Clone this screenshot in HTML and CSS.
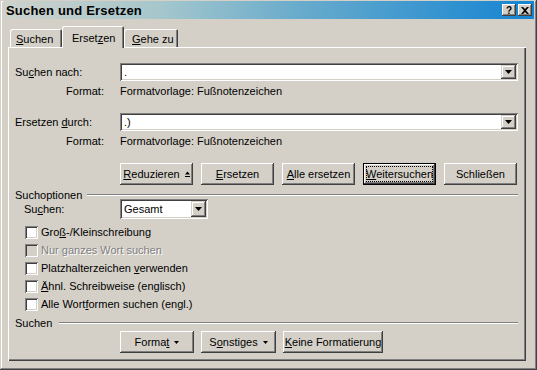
FILE: index.html
```html
<!DOCTYPE html>
<html>

<head>
    <meta charset="utf-8" />
    <title>Suchen und Ersetzen</title>
    <link rel="stylesheet" href="styles.css">
</head>

<body>
    <div class="window">
        <div class="titlebar">
            <span class="title">Suchen und Ersetzen</span>
            <span class="caption-btns">
                <span class="cbtn help">?</span>
                <span class="cbtn close">
                    <svg width="8" height="7" viewBox="0 0 8 7"><path d="M0 0h2l2 2 2-2h2L5 3.5 8 7H6L4 5 2 7H0l3-3.5z" fill="#000"/></svg>
                </span>
            </span>
        </div>

        <div class="tabs">
            <div class="tab tab-suchen"><u>S</u>uchen</div>
            <div class="tab tab-ersetzen active">Erset<u>z</u>en</div>
            <div class="tab tab-gehe"><u>G</u>ehe zu</div>
        </div>

        <div class="panel">
            <div class="field-row">
                <span class="label">Su<u>c</u>hen nach:</span>
                <div class="combo">
                    <span class="value">.</span>
                    <span class="drop"><svg width="7" height="4" viewBox="0 0 7 4"><path d="M0 0h7L3.5 4z" fill="#000"/></svg></span>
                </div>
            </div>
            <div class="fmt-row">
                <span class="label fmt-label">Format:</span>
                <span>Formatvorlage: Fußnotenzeichen</span>
            </div>

            <div class="field-row second">
                <span class="label">Ersetzen <u>d</u>urch:</span>
                <div class="combo">
                    <span class="value">.)</span>
                    <span class="drop"><svg width="7" height="4" viewBox="0 0 7 4"><path d="M0 0h7L3.5 4z" fill="#000"/></svg></span>
                </div>
            </div>
            <div class="fmt-row">
                <span class="label fmt-label">Format:</span>
                <span>Formatvorlage: Fußnotenzeichen</span>
            </div>

            <div class="btn-row">
                <span class="btn"><span><u>R</u>eduzieren</span><svg class="arr" width="5" height="6" viewBox="0 0 5 6"><path d="M0 3.5L2.5 0.5 5 3.5z M0 5h5v1H0z" fill="#000"/></svg></span>
                <span class="btn"><span><u>E</u>rsetzen</span></span>
                <span class="btn"><span><u>A</u>lle ersetzen</span></span>
                <span class="btn default"><span><u>W</u>eitersuchen</span></span>
                <span class="btn"><span>Schließen</span></span>
            </div>

            <div class="group-head">
                <span>Suchoptionen</span>
                <span class="rule"></span>
            </div>
            <div class="select-row">
                <span class="select-label">Su<u>c</u>hen:</span>
                <div class="combo select">
                    <span class="value">Gesamt</span>
                    <span class="drop"><svg width="7" height="4" viewBox="0 0 7 4"><path d="M0 0h7L3.5 4z" fill="#000"/></svg></span>
                </div>
            </div>

            <div class="checks">
                <div class="check"><span class="box"></span><span>Gro<u>ß</u>-/Kleinschreibung</span></div>
                <div class="check disabled"><span class="box"></span><span>Nur ganzes Wort suchen</span></div>
                <div class="check"><span class="box"></span><span>Platzhalterzeichen <u>v</u>erwenden</span></div>
                <div class="check"><span class="box"></span><span><u>Ä</u>hnl. Schreibweise (englisch)</span></div>
                <div class="check"><span class="box"></span><span>Alle Wort<u>f</u>ormen suchen (engl.)</span></div>
            </div>

            <div class="group-head lower">
                <span>Suchen</span>
                <span class="rule"></span>
            </div>
            <div class="btn-row bottom">
                <span class="btn w-format"><span>Forma<u>t</u></span><svg class="arr" width="5" height="3" viewBox="0 0 5 3"><path d="M0 0h5L2.5 3z" fill="#000"/></svg></span>
                <span class="btn w-sonst"><span>S<u>o</u>nstiges</span><svg class="arr" width="5" height="3" viewBox="0 0 5 3"><path d="M0 0h5L2.5 3z" fill="#000"/></svg></span>
                <span class="btn w-keine"><span><u>K</u>eine Formatierung</span></span>
            </div>
        </div>
    </div>
</body>

</html>
```

FILE: styles.css
```css
/* Win2000 dialog: Suchen und Ersetzen */

body {
    margin: 0;
    background: #d4d0c8;
    font-family: "Liberation Sans", Arial, sans-serif;
    font-size: 11px;
    color: #000;
}

.window {
    width: 537px;
    height: 370px;
    box-sizing: border-box;
    padding: 1px 3px 0 3px;
    background: #d4d0c8;
    box-shadow: inset -1px -1px #404040, inset 1px 1px #d4d0c8,
        inset -2px -2px #808080, inset 2px 2px #fff;
}

.titlebar {
    height: 18px;
    display: flex;
    align-items: center;
    justify-content: space-between;
    background: linear-gradient(to right, #ced2cc 0%, #a4c6cc 30%, #6aaccc 55%, #1484d2 100%);
}

.title {
    padding-left: 3px;
    font-size: 13px;
    font-weight: bold;
    letter-spacing: 0.2px;
}

.caption-btns {
    display: flex;
    gap: 2px;
    margin-right: 2px;
}

.cbtn {
    width: 14px;
    height: 12px;
    display: flex;
    align-items: center;
    justify-content: center;
    background: #d4d0c8;
    font-size: 10px;
    font-weight: bold;
    box-shadow: inset -1px -1px #404040, inset 1px 1px #fff, inset -2px -2px #808080;
}

/* tabs */

.tabs {
    display: flex;
    align-items: flex-end;
    height: 21px;
    margin-top: 7px;
    padding-left: 7px;
}

.tab {
    height: 18px;
    box-sizing: border-box;
    padding: 4px 0 0 6px;
    border-radius: 2px 2px 0 0;
    box-shadow: inset 1px 1px #fff, inset -1px 0 #404040, inset -2px 0 #808080;
}

.tab-suchen {
    width: 52px;
}

.tab-ersetzen {
    width: 62px;
}

.tab-gehe {
    width: 54px;
    padding-left: 8px;
}

.tab.active {
    height: 22px;
    margin-bottom: -1px;
    padding: 6px 0 0 10px;
    position: relative;
    z-index: 1;
    background: #d4d0c8;
}

.panel {
    width: 518px;
    height: 314px;
    box-sizing: border-box;
    margin-left: 5px;
    padding: 16px 8px 0 7px;
    box-shadow: inset 1px 1px #fff, inset -1px -1px #404040, inset -2px -2px #808080;
}

/* fields */

.field-row {
    display: flex;
    align-items: center;
    height: 18px;
}

.field-row.second {
    margin-top: 16px;
}

.label {
    width: 105px;
    flex: none;
}

.fmt-row {
    display: flex;
    align-items: center;
    height: 13px;
    margin-top: 3px;
}

.fmt-label {
    box-sizing: border-box;
    padding-right: 16px;
    text-align: right;
}

.combo {
    flex: 1;
    height: 18px;
    display: flex;
    align-items: center;
    justify-content: space-between;
    background: #fff;
    box-shadow: inset 1px 1px #808080, inset -1px -1px #fff,
        inset 2px 2px #404040, inset -2px -2px #d4d0c8;
}

.combo .value {
    padding-left: 4px;
}

.drop {
    width: 15px;
    height: 14px;
    margin-right: 2px;
    display: flex;
    align-items: center;
    justify-content: center;
    background: #d4d0c8;
    box-shadow: inset -1px -1px #404040, inset 1px 1px #d4d0c8,
        inset -2px -2px #808080, inset 2px 2px #fff;
}

/* buttons */

.btn-row {
    display: flex;
    gap: 8px;
    height: 22px;
    margin-top: 16px;
    padding-left: 105px;
}

.btn {
    width: 73px;
    height: 22px;
    display: flex;
    align-items: center;
    justify-content: center;
    background: #d4d0c8;
    box-shadow: inset -1px -1px #404040, inset 1px 1px #fff,
        inset -2px -2px #808080, inset 2px 2px #d4d0c8;
}

.btn .arr {
    margin-left: 5px;
}

.btn.default {
    position: relative;
    box-shadow: inset 0 0 0 1px #000, inset -2px -2px #404040,
        inset 2px 2px #fff, inset -3px -3px #808080;
}

.btn.default::after {
    content: "";
    position: absolute;
    left: 3px;
    right: 3px;
    top: 3px;
    bottom: 3px;
    border: 1px dotted #000;
}

.btn-row.bottom {
    gap: 7px;
    margin-top: 3px;
}

.w-format {
    width: 74px;
}

.w-sonst {
    width: 75px;
}

.w-keine {
    width: 100px;
}

/* options */

.group-head {
    display: flex;
    align-items: center;
    height: 10px;
    margin-top: 5px;
}

.rule {
    flex: 1;
    height: 0;
    margin-left: 5px;
    border-top: 1px solid #808080;
    border-bottom: 1px solid #fff;
}

.lower .rule {
    margin-left: 7px;
}

.select-row {
    display: flex;
    align-items: center;
    height: 20px;
    margin-top: -1px;
    padding-left: 9px;
}

.select-label {
    width: 96px;
}

.combo.select {
    flex: none;
    width: 88px;
    height: 20px;
}

.combo.select .drop {
    height: 16px;
}

.checks {
    margin-top: 4px;
    padding-left: 10px;
}

.check {
    height: 18px;
    display: flex;
    align-items: center;
}

.box {
    width: 13px;
    height: 13px;
    margin-right: 3px;
    background: #fff;
    box-shadow: inset 1px 1px #808080, inset -1px -1px #fff,
        inset 2px 2px #404040, inset -2px -2px #d4d0c8;
}

.check.disabled {
    color: #808080;
    text-shadow: 1px 1px #fff;
}

.check.disabled .box {
    background: #d4d0c8;
}
```
